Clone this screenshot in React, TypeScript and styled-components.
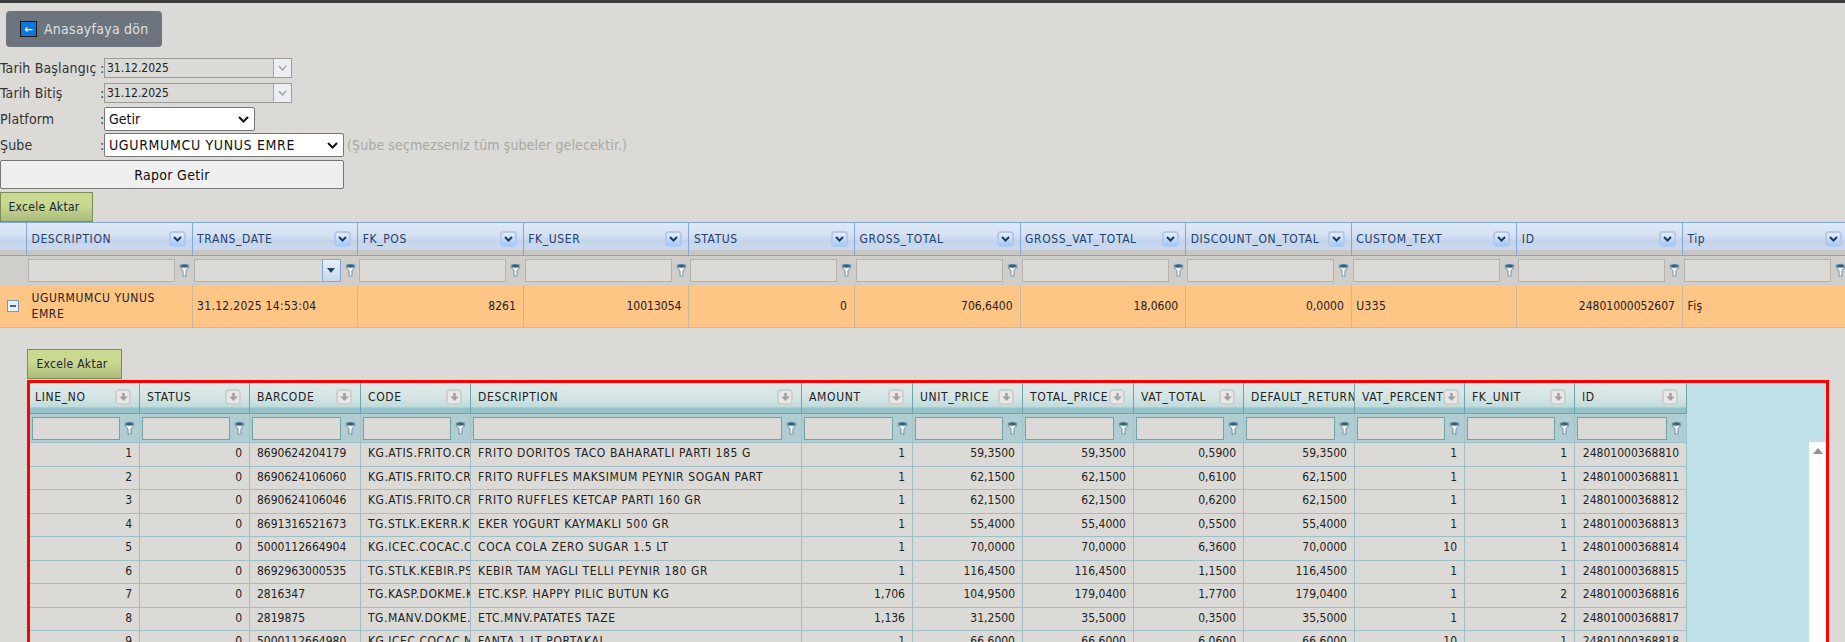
import { createGlobalStyle, styled } from 'styled-components';

const UI_FONT = '"DejaVu Sans Condensed", "DejaVu Sans", Tahoma, sans-serif';

const masterColumns = [
    'DESCRIPTION',
    'TRANS_DATE',
    'FK_POS',
    'FK_USER',
    'STATUS',
    'GROSS_TOTAL',
    'GROSS_VAT_TOTAL',
    'DISCOUNT_ON_TOTAL',
    'CUSTOM_TEXT',
    'ID',
    'Tip',
];

const masterRow = [
    { text: 'UGURMUMCU YUNUS EMRE', spacing: 0.6 },
    { text: '31.12.2025 14:53:04', spacing: 0.3 },
    { text: '8261', right: true },
    { text: '10013054', right: true },
    { text: '0', right: true },
    { text: '706,6400', right: true },
    { text: '18,0600', right: true },
    { text: '0,0000', right: true },
    { text: 'U335', spacing: 0.4 },
    { text: '24801000052607', right: true },
    { text: 'Fiş', spacing: 0.4 },
];

const detailColumns = [
    'LINE_NO',
    'STATUS',
    'BARCODE',
    'CODE',
    'DESCRIPTION',
    'AMOUNT',
    'UNIT_PRICE',
    'TOTAL_PRICE',
    'VAT_TOTAL',
    'DEFAULT_RETURN',
    'VAT_PERCENT',
    'FK_UNIT',
    'ID',
];

const BARCODE_COL = 2;
const CODE_COL = 3;
const DESCRIPTION_COL = 4;

const detailRows = [
    ['1', '0', '8690624204179', 'KG.ATIS.FRITO.CRPS', 'FRITO DORITOS TACO BAHARATLI PARTI 185 G', '1', '59,3500', '59,3500', '0,5900', '59,3500', '1', '1', '24801000368810'],
    ['2', '0', '8690624106060', 'KG.ATIS.FRITO.CRPS', 'FRITO RUFFLES MAKSIMUM PEYNIR SOGAN PART', '1', '62,1500', '62,1500', '0,6100', '62,1500', '1', '1', '24801000368811'],
    ['3', '0', '8690624106046', 'KG.ATIS.FRITO.CRPS', 'FRITO RUFFLES KETCAP PARTI 160 GR', '1', '62,1500', '62,1500', '0,6200', '62,1500', '1', '1', '24801000368812'],
    ['4', '0', '8691316521673', 'TG.STLK.EKERR.KYMK', 'EKER YOGURT KAYMAKLI 500 GR', '1', '55,4000', '55,4000', '0,5500', '55,4000', '1', '1', '24801000368813'],
    ['5', '0', '5000112664904', 'KG.ICEC.COCAC.COLA', 'COCA COLA ZERO SUGAR 1.5 LT', '1', '70,0000', '70,0000', '6,3600', '70,0000', '10', '1', '24801000368814'],
    ['6', '0', '8692963000535', 'TG.STLK.KEBIR.PSRT', 'KEBIR TAM YAGLI TELLI PEYNIR 180 GR', '1', '116,4500', '116,4500', '1,1500', '116,4500', '1', '1', '24801000368815'],
    ['7', '0', '2816347', 'TG.KASP.DOKME.KASP', 'ETC.KSP. HAPPY PILIC BUTUN KG', '1,706', '104,9500', '179,0400', '1,7700', '179,0400', '1', '2', '24801000368816'],
    ['8', '0', '2819875', 'TG.MANV.DOKME.SEBZ', 'ETC.MNV.PATATES TAZE', '1,136', '31,2500', '35,5000', '0,3500', '35,5000', '1', '2', '24801000368817'],
    ['9', '0', '5000112664980', 'KG.ICEC.COCAC.MEYV', 'FANTA 1 LT PORTAKAL', '1', '66,6000', '66,6000', '6,0600', '66,6000', '10', '1', '24801000368818'],
];

const FunnelIcon = () => (
    <FunnelSvg viewBox="0 0 11 14">
        <path d="M0.5 3 C0.5 0 10.5 0 10.5 3 C10.5 5.5 7.5 6.5 7.5 8.5 L7.5 13.5 L3.5 13.5 L3.5 8.5 C3.5 6.5 0.5 5.5 0.5 3 Z" fill="#7c97aa" />
        <path d="M2 4.5 C3 6 4.6 7 4.6 8.5 L4.6 12.5 L6.4 12.5 L6.4 8.5 C6.4 7 8 6 9 4.5 Z" fill="#fff" />
        <ellipse cx="5.5" cy="3" rx="3.4" ry="1.6" fill="#2c6488" />
    </FunnelSvg>
);

const ChevronIcon = () => (
    <svg width="9" height="6" viewBox="0 0 9 6">
        <path d="M1 1 L4.5 4.5 L8 1" fill="none" stroke="#1d3a66" strokeWidth="2" />
    </svg>
);

const GrayArrowIcon = () => (
    <svg width="9" height="8" viewBox="0 0 10 9">
        <path d="M3.5 0 H6.5 V4 H10 L5 9 L0 4 H3.5 Z" fill="#a3a3a3" />
    </svg>
);

const SelectChevron = () => (
    <svg width="11" height="7" viewBox="0 0 11 7">
        <path d="M1 1 L5.5 5.5 L10 1" fill="none" stroke="#111" strokeWidth="2" />
    </svg>
);

const DateChevron = () => (
    <svg width="9" height="6" viewBox="0 0 9 6">
        <path d="M1 1 L4.5 5 L8 1" fill="none" stroke="#a5a5a5" strokeWidth="1.5" />
    </svg>
);

const App = () => {
    return (
        <Page>
            <GlobalStyle />
            <TopBar />
            <BackButton>
                <BackIcon>←</BackIcon>
                Anasayfaya dön
            </BackButton>
            <FormRow $height={20} $after={5}>
                <FormLabel>Tarih Başlangıç</FormLabel>
                <Colon>:</Colon>
                <DateField>
                    <DateValue>31.12.2025</DateValue>
                    <DateButton>
                        <DateChevron />
                    </DateButton>
                </DateField>
            </FormRow>
            <FormRow $height={20} $after={4}>
                <FormLabel>Tarih Bitiş</FormLabel>
                <Colon>:</Colon>
                <DateField>
                    <DateValue>31.12.2025</DateValue>
                    <DateButton>
                        <DateChevron />
                    </DateButton>
                </DateField>
            </FormRow>
            <FormRow $height={24} $after={2}>
                <FormLabel>Platform</FormLabel>
                <Colon>:</Colon>
                <SelectBox $width={151}>
                    Getir
                    <SelectChevron />
                </SelectBox>
            </FormRow>
            <FormRow $height={24} $after={3}>
                <FormLabel>Şube</FormLabel>
                <Colon>:</Colon>
                <SelectBox $width={240}>
                    <SelectText>UGURMUMCU YUNUS EMRE</SelectText>
                    <SelectChevron />
                </SelectBox>
                <Hint>(Şube seçmezseniz tüm şubeler gelecektir.)</Hint>
            </FormRow>
            <ReportButton>Rapor Getir</ReportButton>
            <ExcelButton $width={93}>Excele Aktar</ExcelButton>

            <MasterGrid>
                <MasterHeaderRow>
                    <MasterHeaderCell />
                    {masterColumns.map((name) => (
                        <MasterHeaderCell key={name}>
                            <span>{name}</span>
                            <MasterSortButton>
                                <ChevronIcon />
                            </MasterSortButton>
                        </MasterHeaderCell>
                    ))}
                </MasterHeaderRow>
                <MasterFilterRow>
                    <div />
                    {masterColumns.map((name) => (
                        <MasterFilterCell key={name}>
                            <MasterFilterInput>
                                {name === 'TRANS_DATE' && (
                                    <DropButton>
                                        <DropArrow />
                                    </DropButton>
                                )}
                            </MasterFilterInput>
                            <FunnelIcon />
                        </MasterFilterCell>
                    ))}
                </MasterFilterRow>
                <MasterDataRow>
                    <ExpandCell>
                        <MinusBox />
                    </ExpandCell>
                    {masterRow.map((cell) => (
                        <MasterCell key={cell.text} $right={cell.right} $spacing={cell.spacing ?? 0}>
                            <span>{cell.text}</span>
                        </MasterCell>
                    ))}
                </MasterDataRow>
            </MasterGrid>

            <DetailArea>
                <ExcelButton $width={95}>Excele Aktar</ExcelButton>
                <DetailFrame>
                    <DetailGrid>
                        <DetailHeaderRow>
                            {detailColumns.map((name, i) => (
                                <DetailHeaderCell key={name + i} $first={i === 0}>
                                    <HeaderLabel>{name}</HeaderLabel>
                                    <DetailSortButton>
                                        <GrayArrowIcon />
                                    </DetailSortButton>
                                </DetailHeaderCell>
                            ))}
                        </DetailHeaderRow>
                        <DetailFilterRow>
                            {detailColumns.map((name, i) => (
                                <DetailFilterCell key={name + i}>
                                    <DetailFilterInput />
                                    <FunnelIcon />
                                </DetailFilterCell>
                            ))}
                        </DetailFilterRow>
                        {detailRows.map((row) => (
                            <DetailDataRow key={row[0]}>
                                {row.map((value, i) => (
                                    <DetailCell
                                        key={i}
                                        $left={i === BARCODE_COL || i === CODE_COL || i === DESCRIPTION_COL}
                                        $spacing={i === CODE_COL ? 0.5 : i === DESCRIPTION_COL ? 0.6 : 0}
                                    >
                                        {value}
                                    </DetailCell>
                                ))}
                            </DetailDataRow>
                        ))}
                    </DetailGrid>
                    <RightArea>
                        <Scrollbar>
                            <ScrollArrow />
                        </Scrollbar>
                    </RightArea>
                </DetailFrame>
            </DetailArea>
        </Page>
    );
};

export default App;

const MASTER_TEMPLATE = '27px repeat(11, 165.6px)';
const DETAIL_TEMPLATE = '110px 110px 111px 110px 331px 111px 110px 111px 110px 111px 110px 110px 112px';

const GlobalStyle = createGlobalStyle`
    html, body {
        margin: 0;
        padding: 0;
        background: #dbdad6;
    }
`;

const Page = styled.div`
    width: 1845px;
    height: 642px;
    overflow: hidden;
    background: #dbdad6;
    font-family: ${UI_FONT};
    font-size: 12px;
    color: #222;
`;

const TopBar = styled.div`
    height: 3px;
    background: #3b3b3b;
`;

const BackButton = styled.div`
    display: flex;
    align-items: center;
    gap: 7px;
    width: 156px;
    height: 36px;
    box-sizing: border-box;
    margin: 8px 0 11px 6px;
    padding-left: 14px;
    border-radius: 4px;
    background: #6c757d;
    color: #dfe2e4;
    font-size: 14px;
    letter-spacing: 0.25px;
    white-space: nowrap;
`;

const BackIcon = styled.span`
    display: flex;
    align-items: center;
    justify-content: center;
    width: 17px;
    height: 16px;
    box-sizing: border-box;
    border: 1px solid #111;
    background: #0a78dc;
    color: #fff;
    font-size: 11px;
    font-weight: bold;
`;

const FormRow = styled.div<{ $height: number; $after: number }>`
    display: flex;
    align-items: center;
    height: ${(p) => p.$height}px;
    margin-bottom: ${(p) => p.$after}px;
    font-size: 14px;
`;

const FormLabel = styled.div`
    width: 100px;
    white-space: nowrap;
    color: #333;
    letter-spacing: 0.15px;
`;

const Colon = styled.div`
    width: 4px;
    color: #333;
`;

const DateField = styled.div`
    display: flex;
    width: 188px;
    height: 100%;
    box-sizing: border-box;
    border: 1px solid #9c9b97;
`;

const DateValue = styled.div`
    flex: 1;
    padding-left: 2px;
    line-height: 18px;
    font-size: 12px;
    color: #222;
`;

const DateButton = styled.div`
    display: flex;
    align-items: center;
    justify-content: center;
    width: 17px;
    background: #eceff2;
    border-left: 1px solid #a9a9a9;
`;

const SelectBox = styled.div<{ $width: number }>`
    display: flex;
    align-items: center;
    justify-content: space-between;
    width: ${(p) => p.$width}px;
    height: 100%;
    box-sizing: border-box;
    padding: 0 5px 0 4px;
    border: 1px solid #767676;
    border-radius: 2px;
    background: #fff;
    color: #111;
    font-size: 14px;
`;

const SelectText = styled.span`
    letter-spacing: 0.65px;
    white-space: nowrap;
`;

const Hint = styled.div`
    margin-left: 3px;
    color: #a9a8a4;
    font-size: 14px;
    letter-spacing: 0.12px;
`;

const ReportButton = styled.div`
    display: flex;
    align-items: center;
    justify-content: center;
    width: 344px;
    height: 29px;
    box-sizing: border-box;
    margin-bottom: 3px;
    border: 1px solid #767676;
    border-radius: 2px;
    background: #efefef;
    color: #111;
    font-size: 14px;
    letter-spacing: 0.3px;
`;

const ExcelButton = styled.div<{ $width: number }>`
    display: flex;
    align-items: center;
    justify-content: center;
    width: ${(p) => p.$width}px;
    height: 30px;
    box-sizing: border-box;
    padding-right: 5px;
    border: 1px solid #7a8f55;
    background: linear-gradient(#c9d98f 0%, #c9d98f 45%, #a9ba7c 100%);
    color: #223;
    font-size: 12px;
    letter-spacing: 0.3px;
`;

const MasterGrid = styled.div`
    width: 1845px;
    overflow: hidden;
`;

const MasterHeaderRow = styled.div`
    display: grid;
    grid-template-columns: ${MASTER_TEMPLATE};
    height: 34px;
    box-sizing: border-box;
    border-top: 1px solid #7fa6de;
    border-bottom: 1px solid #7fa6de;
    width: 1848px;
`;

const MasterHeaderCell = styled.div`
    display: flex;
    align-items: center;
    justify-content: space-between;
    box-sizing: border-box;
    padding: 0 6px 0 4.5px;
    border-right: 1px solid #7fa6de;
    background: linear-gradient(#dfe9f7 0%, #d4e0f2 40%, #c3d4ec 55%, #cad9ef 84%, #c9c8c5 84%, #c9c8c5 100%);
    color: #24406c;
    font-size: 12px;
    letter-spacing: 0.6px;
    white-space: nowrap;
    overflow: hidden;
`;

const MasterSortButton = styled.div`
    display: flex;
    align-items: center;
    justify-content: center;
    flex: none;
    width: 17px;
    height: 16px;
    box-sizing: border-box;
    border: 2px solid #b5c8ec;
    border-radius: 4px;
    background: linear-gradient(#e4eefc, #a3cafb);
`;

const MasterFilterRow = styled.div`
    display: grid;
    grid-template-columns: ${MASTER_TEMPLATE};
    height: 29px;
    background: #cfcecb;
    width: 1848px;
`;

const MasterFilterCell = styled.div`
    display: flex;
    align-items: center;
    box-sizing: border-box;
    gap: 4px;
    padding: 0 2.6px 1px 1px;
`;

const FunnelSvg = styled.svg`
    flex: none;
    width: 11px;
    height: 14px;
`;

const MasterFilterInput = styled.div`
    display: flex;
    justify-content: flex-end;
    flex: 1;
    height: 23px;
    box-sizing: border-box;
    border: 1px solid #b3b2ae;
    background: #dbdad6;
`;

const DropButton = styled.div`
    display: flex;
    align-items: center;
    justify-content: center;
    width: 17px;
    margin: -1px;
    border: 1px solid #7fa6de;
    background: linear-gradient(#e8eff9, #c8d8ef);
`;

const DropArrow = styled.div`
    width: 0;
    height: 0;
    border-left: 4px solid transparent;
    border-right: 4px solid transparent;
    border-top: 5px solid #24406c;
`;

const MasterDataRow = styled.div`
    display: grid;
    grid-template-columns: ${MASTER_TEMPLATE};
    height: 43px;
    box-sizing: border-box;
    background: #ffc585;
    border-bottom: 1px solid #bdbcb8;
    width: 1848px;
`;

const ExpandCell = styled.div`
    display: flex;
    align-items: center;
    padding-left: 7px;
`;

const MinusBox = styled.div`
    display: flex;
    align-items: center;
    justify-content: center;
    width: 12px;
    height: 12px;
    box-sizing: border-box;
    border: 1px solid #6f97c9;
    background: #e6effa;

    &::after {
        content: '';
        width: 6px;
        height: 2px;
        background: #4b5f7c;
    }
`;

const MasterCell = styled.div<{ $right?: boolean; $spacing: number }>`
    display: flex;
    align-items: center;
    justify-content: ${(p) => (p.$right ? 'flex-end' : 'flex-start')};
    box-sizing: border-box;
    padding: 0 7px 0 4.5px;
    border-right: 1px solid #c7b79d;
    line-height: 16px;
    letter-spacing: ${(p) => p.$spacing}px;
    color: #222;
`;

const DetailArea = styled.div`
    padding: 21px 0 0 27px;
`;

const DetailFrame = styled.div`
    display: flex;
    width: 1802px;
    height: 300px;
    box-sizing: border-box;
    margin-top: 1px;
    border: 3px solid #f00;
    border-bottom: none;
    background: #c1e1e8;
`;

const DetailGrid = styled.div`
    width: 1657px;
    flex: none;
`;

const DetailHeaderRow = styled.div`
    display: grid;
    grid-template-columns: ${DETAIL_TEMPLATE};
    height: 31px;
    box-sizing: border-box;
    border-bottom: 1px solid #6ea3a8;
`;

const DetailHeaderCell = styled.div<{ $first?: boolean }>`
    display: flex;
    align-items: center;
    box-sizing: border-box;
    padding: 0 0 2px ${(p) => (p.$first ? 5 : 7)}px;
    border-right: 1px solid #6ea3a8;
    background: linear-gradient(#dde9e8 0%, #d8e6e5 40%, #c2dcdc 78%, #95c3c9 84%, #95c3c9 100%);
    color: #222;
    letter-spacing: 0.65px;
    overflow: hidden;
    white-space: nowrap;

    &::after {
        content: '';
        flex: 0 1 8px;
        min-width: 0;
    }
`;

const HeaderLabel = styled.span`
    flex: none;
`;

const DetailSortButton = styled.div`
    display: flex;
    align-items: center;
    justify-content: center;
    flex: none;
    margin-left: auto;
    width: 16px;
    height: 16px;
    box-sizing: border-box;
    border: 2px solid #cfcfcf;
    border-radius: 4px;
    background: #e8e8e8;
`;

const DetailFilterRow = styled.div`
    display: grid;
    grid-template-columns: ${DETAIL_TEMPLATE};
    height: 28px;
    background: #b0cdd2;
`;

const DetailFilterCell = styled.div`
    display: flex;
    align-items: center;
    box-sizing: border-box;
    gap: 4px;
    padding: 0 4px 0 2px;
    border-right: 1px solid #a3c4ca;
`;

const DetailFilterInput = styled.div`
    flex: 1;
    height: 23px;
    box-sizing: border-box;
    border: 1px solid #6ea3a8;
    background: #dbdad6;
`;

const DetailDataRow = styled.div`
    display: grid;
    grid-template-columns: ${DETAIL_TEMPLATE};
    height: 23.5px;
    box-sizing: border-box;
    border-top: 1px solid #9fc0cb;
    background: #dbdad6;
`;

const DetailCell = styled.div<{ $left?: boolean; $spacing: number }>`
    box-sizing: border-box;
    padding: ${(p) => (p.$left ? '0 0 0 7px' : '0 7px')};
    border-right: 1px solid #9fc0cb;
    line-height: 20px;
    letter-spacing: ${(p) => p.$spacing}px;
    text-align: ${(p) => (p.$left ? 'left' : 'right')};
    white-space: nowrap;
    overflow: hidden;
    color: #222;
`;

const RightArea = styled.div`
    flex: 1;
    display: flex;
    justify-content: flex-end;
    padding-top: 59px;
`;

const Scrollbar = styled.div`
    display: flex;
    justify-content: center;
    width: 17px;
    padding-top: 6px;
    background: #fdfdfd;
`;

const ScrollArrow = styled.div`
    width: 0;
    height: 0;
    border-left: 5px solid transparent;
    border-right: 5px solid transparent;
    border-bottom: 6px solid #8f8f8f;
`;
